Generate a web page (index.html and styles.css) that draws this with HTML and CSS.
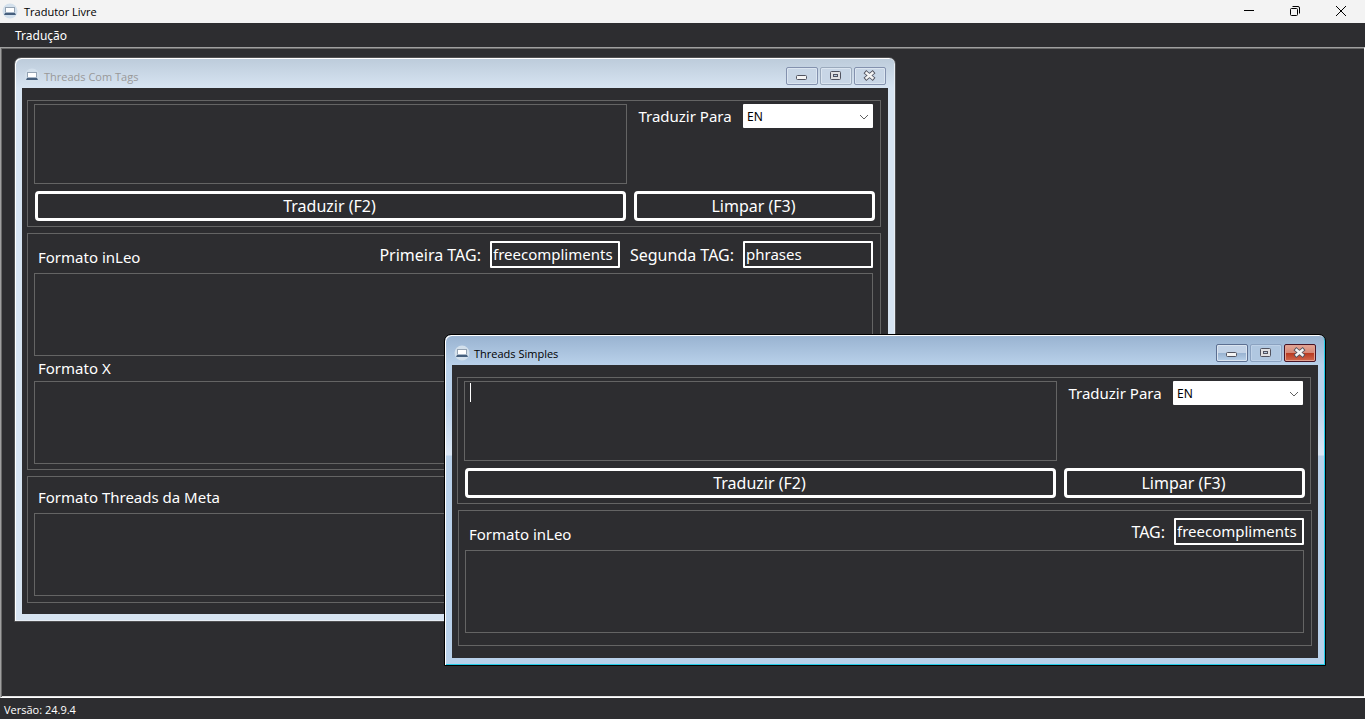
FILE: index.html
```html
<!DOCTYPE html>
<html lang="pt-BR">
<head>
    <meta charset="UTF-8">
    <meta name="viewport" content="width=device-width, initial-scale=1.0">
    <title>Tradutor Livre</title>
    <link rel="stylesheet" href="styles.css">
</head>
<body>
    <!-- shared icons -->
    <svg class="defs" aria-hidden="true">
        <symbol id="app" viewBox="0 0 16 16">
            <circle cx="8" cy="8" r="7.500" fill="#d3e0ec"/>
            <path d="M3 4h10v5H3z" fill="#94a3b3"/>
            <path d="M4 5h8v4H4z" fill="#fff"/>
            <path d="M3 9h10v1H3z" fill="#a9b8c8"/>
            <path d="M3 10h10l1 2H2z" fill="#465f7d"/>
        </symbol>
        <symbol id="min" viewBox="0 0 15 11">
            <rect x="2.500" y="5.500" width="10" height="4" rx="1" fill="#f4f4f4" stroke="#51535f"/>
        </symbol>
        <symbol id="max" viewBox="0 0 15 11">
            <rect x="2.500" y="1.500" width="10" height="8" rx="1" fill="#e0e0e2" stroke="#51535f"/>
            <rect x="5.500" y="4.500" width="4" height="2" fill="#b9cbe0" stroke="#51535f"/>
        </symbol>
        <symbol id="close" viewBox="0 0 15 11">
            <path d="M4.500 3l6 5M10.500 3l-6 5" stroke="#51535f" stroke-width="4.200" stroke-linecap="square"/>
            <path d="M4.500 3l6 5M10.500 3l-6 5" stroke="#f4f4f4" stroke-width="2.400" stroke-linecap="square"/>
        </symbol>
        <symbol id="arrow" viewBox="0 0 10 6">
            <path d="M1 1l4 4 4-4" fill="none" stroke="#606060"/>
        </symbol>
    </svg>

    <header class="app-bar">
        <svg class="app-icon"><use href="#app"/></svg>
        <h1>Tradutor Livre</h1>
        <div class="app-buttons">
            <button aria-label="Minimizar"><svg width="10" height="10"><path d="M0 4.500h10"/></svg></button>
            <button aria-label="Restaurar"><svg width="10" height="10"><rect x=".5" y="2.500" width="7" height="7" rx="1"/><path d="M2.500 .5H8a1.500 1.500 0 0 1 1.500 1.500v5.500"/></svg></button>
            <button aria-label="Fechar"><svg width="10" height="10"><path d="M0 0l10 10M10 0L0 10"/></svg></button>
        </div>
    </header>

    <nav class="menu">
        <a href="#">Tradução</a>
    </nav>

    <main class="workspace">
        <section class="window tags">
            <div class="title-bar">
                <svg class="app-icon"><use href="#app"/></svg>
                <h2>Threads Com Tags</h2>
                <div class="win-buttons">
                    <button aria-label="Minimizar"><svg><use href="#min"/></svg></button>
                    <button class="off" aria-label="Maximizar"><svg><use href="#max"/></svg></button>
                    <button aria-label="Fechar"><svg><use href="#close"/></svg></button>
                </div>
            </div>
            <div class="client">
                <div class="group">
                    <div class="source">
                        <textarea aria-label="Texto"></textarea>
                        <label for="lang1">Traduzir Para</label>
                        <div class="combo">
                            <select id="lang1"><option>EN</option></select>
                            <svg><use href="#arrow"/></svg>
                        </div>
                    </div>
                    <div class="actions">
                        <button>Traduzir (F2)</button>
                        <button>Limpar (F3)</button>
                    </div>
                </div>
                <div class="group formats">
                    <div class="row">
                        <label class="format" for="leo1">Formato inLeo</label>
                        <label for="tag1">Primeira TAG:</label>
                        <input id="tag1" type="text" value="freecompliments">
                        <label for="tag2">Segunda TAG:</label>
                        <input id="tag2" type="text" value="phrases">
                    </div>
                    <textarea id="leo1"></textarea>
                    <label class="between" for="x1">Formato X</label>
                    <textarea id="x1"></textarea>
                </div>
                <div class="group meta">
                    <div class="row">
                        <label class="format" for="meta1">Formato Threads da Meta</label>
                    </div>
                    <textarea id="meta1"></textarea>
                </div>
            </div>
        </section>

        <section class="window simple active">
            <div class="title-bar">
                <svg class="app-icon"><use href="#app"/></svg>
                <h2>Threads Simples</h2>
                <div class="win-buttons">
                    <button aria-label="Minimizar"><svg><use href="#min"/></svg></button>
                    <button class="off" aria-label="Maximizar"><svg><use href="#max"/></svg></button>
                    <button class="close" aria-label="Fechar"><svg><use href="#close"/></svg></button>
                </div>
            </div>
            <div class="client">
                <div class="group">
                    <div class="source">
                        <textarea aria-label="Texto"></textarea>
                        <span class="caret"></span>
                        <label for="lang2">Traduzir Para</label>
                        <div class="combo">
                            <select id="lang2"><option>EN</option></select>
                            <svg><use href="#arrow"/></svg>
                        </div>
                    </div>
                    <div class="actions">
                        <button>Traduzir (F2)</button>
                        <button>Limpar (F3)</button>
                    </div>
                </div>
                <div class="group result">
                    <div class="row">
                        <label class="format" for="leo2">Formato inLeo</label>
                        <label for="tag3">TAG:</label>
                        <input id="tag3" type="text" value="freecompliments">
                    </div>
                    <textarea id="leo2"></textarea>
                </div>
            </div>
        </section>
    </main>

    <footer class="status">Versão: 24.9.4</footer>
</body>
</html>
```

FILE: styles.css
```css
* {
    box-sizing: border-box;
}
body {
    margin: 0;
    min-height: 100vh;
    display: flex;
    flex-direction: column;
    background: #2d2d30;
    color: #fff;
    font: 12px/16px "Noto Sans", "Open Sans", sans-serif;
}
h1, h2 {
    margin: 0;
    font-size: 12px;
    font-weight: normal;
}
button, input, select, textarea {
    margin: 0;
    padding: 0;
    font: inherit;
    color: inherit;
}
.defs {
    position: absolute;
    width: 0;
    height: 0;
}
.app-icon {
    width: 16px;
    height: 16px;
    flex: none;
}

/* main window */
.app-bar {
    display: flex;
    align-items: center;
    height: 23px;
    padding: 0 1px 1px 2px;
    background: #f3f3f3;
    color: #000;
}
.app-bar h1 {
    margin-left: 6px;
    padding-top: 2px;
    font-family: "Open Sans", sans-serif;
    font-size: 11px;
}
.app-buttons {
    display: flex;
    margin-left: auto;
}
.app-buttons button {
    display: flex;
    align-items: center;
    justify-content: center;
    width: 46px;
    height: 20px;
    border: 0;
    background: none;
}
.app-buttons svg {
    fill: none;
    stroke: #000;
}
.menu {
    display: flex;
    align-items: center;
    height: 24px;
    padding: 2px 0 0 15px;
}
.menu a {
    color: #fff;
    text-decoration: none;
}
.workspace {
    position: relative;
    flex: 1;
    min-height: 640px;
    border: 1px solid;
    border-color: #a0a0a0 #fff #fff #a0a0a0;
    box-shadow: inset 1px 1px 0 #696969, inset 0 -1px 0 #e3e3e3;
}
.status {
    height: 21px;
    padding: 4px;
    font-family: "Open Sans", sans-serif;
    font-size: 11px;
}

/* child windows */
.window {
    position: absolute;
    width: 882px;
    padding: 1px 7px 7px;
    border: 1px solid #505052;
    border-radius: 7px 7px 0 0;
    background: linear-gradient(#bccbda, #d7e4f2 30px);
    box-shadow: inset 1px 1px 0 #fff, inset -1px -1px 0 #e8eef5;
}
.tags {
    left: 13px;
    top: 9px;
}
.simple {
    left: 443px;
    top: 286px;
}
.active {
    border-color: #000;
    background: linear-gradient(#98b2d0, #b9d1ea 30px, #b9d1ea 70px, #dce7f5 120px, #b9d1ea 121px);
    box-shadow: inset 1px 1px 0 #fff, inset -1px -1px 0 #22cbe8;
}
.title-bar {
    display: flex;
    align-items: center;
    height: 29px;
    padding: 4px 2px 0;
    color: #999;
}
.active .title-bar {
    color: #000;
}
.title-bar h2 {
    margin-left: 4px;
    padding-top: 2px;
    font-family: "Open Sans", sans-serif;
    font-size: 11px;
}
.win-buttons {
    display: flex;
    gap: 2px;
    margin-left: auto;
}
.win-buttons button {
    display: flex;
    align-items: center;
    justify-content: center;
    width: 32px;
    height: 18px;
    padding-right: 1px;
    border: 1px solid #8391ae;
    border-radius: 2px;
    background: #c8d6e6;
    box-shadow: inset 0 0 0 1px #dbe5f0;
}
.win-buttons svg {
    width: 15px;
    height: 11px;
}
.win-buttons .off {
    border-color: #9baabd;
}
.active .win-buttons button {
    border-color: #5c6f91;
    background: linear-gradient(#c3d3e7 50%, #98b2d0 50%, #b9d1ea);
}
.active .win-buttons .off {
    border-color: #8ba2c0;
    background: #b0c7e0;
    box-shadow: inset 0 0 0 1px #bfd2e8;
}
.active .win-buttons .close {
    border-color: #471426;
    background: linear-gradient(#e3a697, #d58674 50%, #b8381f 50%, #d1694f);
    box-shadow: inset 0 0 0 1px #e0a090;
}
.client {
    display: flex;
    flex-direction: column;
    gap: 6px;
    padding: 12px 7px 12px 5px;
    background: #2d2d30;
    font-size: 16px;
    line-height: 24px;
}
.tags .client {
    padding-bottom: 11px;
}
.group {
    padding: 3px 7px 5px 6px;
    border: 1px solid #646464;
}
textarea {
    display: block;
    width: 100%;
    height: 83px;
    border: 1px solid #646464;
    border-radius: 0;
    background: none;
    resize: none;
    outline: none;
}

/* source text */
.source {
    position: relative;
    display: flex;
    justify-content: space-between;
    align-items: flex-start;
}
.source label {
    font-size: 15px;
}
.source textarea {
    width: 593px;
    height: 80px;
}
.caret {
    position: absolute;
    left: 6px;
    top: 2px;
    width: 1px;
    height: 19px;
    background: #fff;
}
.combo {
    position: relative;
    width: 130px;
    height: 24px;
}
.combo select {
    display: block;
    width: 100%;
    height: 100%;
    padding: 1px 4px 0;
    border: 0;
    border-radius: 1px;
    background: #fff;
    color: #000;
    font-size: 12px;
    appearance: none;
}
.combo svg {
    position: absolute;
    right: 4px;
    top: 10px;
    width: 10px;
    height: 6px;
    pointer-events: none;
}
.actions {
    display: flex;
    gap: 8px;
    margin: 7px -2px 0 1px;
}
.actions button {
    width: 241px;
    height: 30px;
    padding-right: 2px;
    border: 3px solid #fff;
    border-radius: 4px;
    background: none;
}
.actions button:first-child {
    flex: 1;
}

/* translated text */
.row {
    display: flex;
    align-items: center;
    height: 27px;
    margin-bottom: 5px;
}
.row input {
    width: 130px;
    height: 27px;
    margin: 0 10px 0 9px;
    padding: 0 0 2px 1px;
    border: 2px solid #fff;
    border-radius: 1px;
    background: none;
    font-size: 15px;
}
.row input:last-child {
    margin-right: 0;
}
.format {
    margin-right: auto;
    padding: 4px 0 0 4px;
    font-size: 15px;
}
.formats {
    padding-top: 7px;
}
.between {
    display: block;
    height: 25px;
    padding-left: 4px;
    font-size: 15px;
}
.result {
    margin: 0 -1px 0 1px;
    padding: 7px 7px 12px 6px;
}
.meta {
    padding: 4px 7px 6px 6px;
}
```
